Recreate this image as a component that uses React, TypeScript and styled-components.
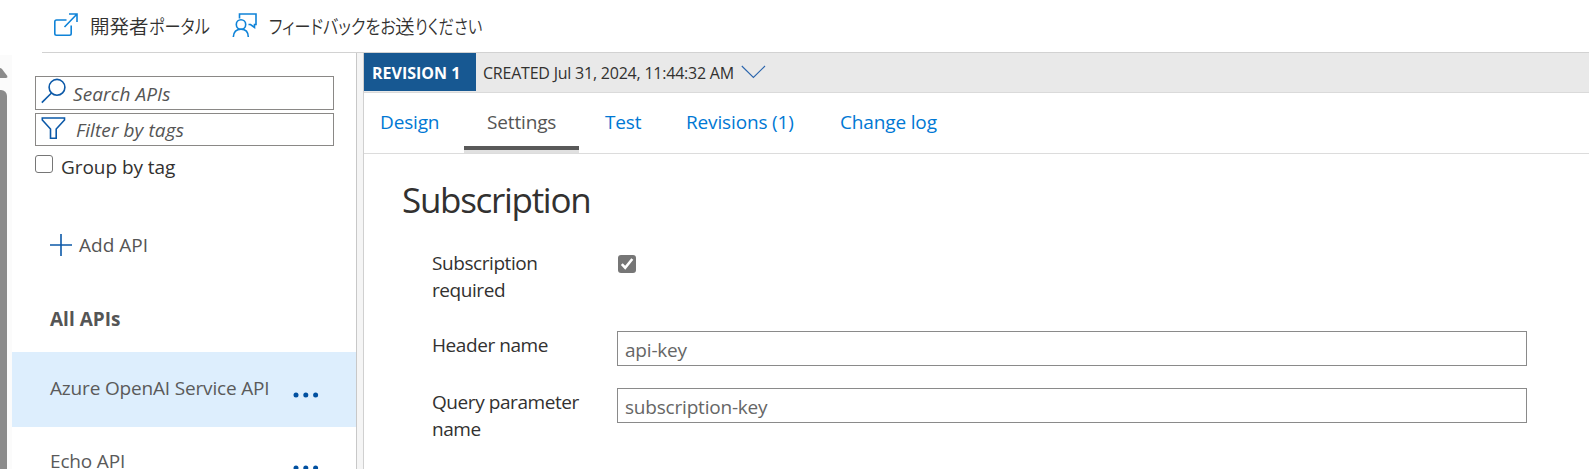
import React from "react";
import styled, { createGlobalStyle } from "styled-components";

const GlobalStyle = createGlobalStyle`
  * { box-sizing: border-box; }
  html, body { margin: 0; padding: 0; }
  body {
    height: 469px;
    overflow: hidden;
    background: #fff;
    color: #323130;
    font-family: "Open Sans", "Noto Sans CJK JP", sans-serif;
    font-size: 19px;
    line-height: 27px;
  }
`;

const Page = styled.div`
  display: flex;
  flex-direction: column;
  height: 469px;
  overflow: hidden;
`;

const Toolbar = styled.header`
  display: flex;
  flex: none;
  height: 53px;
  margin-left: 42px;
  padding-left: 12px;
  border-bottom: 1px solid #d2d2d2;
`;

const Command = styled.button<{ $width: number }>`
  display: flex;
  align-items: flex-start;
  gap: 12px;
  width: ${(p) => p.$width}px;
  padding: 13px 0 0;
  border: 0;
  background: none;
  color: #323130;
  font: inherit;
  text-align: left;

  svg { flex: none; }
`;

const CommandLabel = styled.span`
  margin-top: -1px;
  white-space: nowrap;
  font-family: "Noto Sans CJK JP", sans-serif;
  font-weight: 350;
  font-size: 19.5px;
  line-height: 28px;
  font-feature-settings: "palt";
`;

const Kana = styled.span<{ $width: number; $scale: number }>`
  display: inline-block;
  width: ${(p) => p.$width / p.$scale}px;
  margin-right: ${(p) => p.$width - p.$width / p.$scale}px;
  transform: scaleX(${(p) => p.$scale});
  transform-origin: left;
`;

const Body = styled.div`
  display: flex;
  flex: 1;
  min-height: 0;
`;

const ScrollTrack = styled.div`
  display: flex;
  flex-direction: column;
  width: 12px;
  margin-top: 2px;
  background: #fbfbfb;

  svg { display: block; margin-top: 13px; }
`;

const ScrollThumb = styled.div`
  flex: 1;
  width: 7px;
  margin-top: 12px;
  border-top-right-radius: 6px;
  background: #8b8b8b;
`;

const Sidebar = styled.aside`
  width: 345px;
  border-right: 1px solid #c8c8c8;
  overflow: hidden;
`;

const SearchBox = styled.div<{ $height: number; $gap: number; $top: number }>`
  display: flex;
  width: 299px;
  height: ${(p) => p.$height}px;
  margin-left: 23px;
  padding-left: 5px;
  gap: ${(p) => p.$gap}px;
  border: 1px solid #8a8886;
  color: #555;
  font-style: italic;
  letter-spacing: 0.1px;

  svg { flex: none; margin-top: 1px; }
  span { padding-top: ${(p) => p.$top}px; }
`;

const Filters = styled.div`
  display: flex;
  flex-direction: column;
  gap: 3px;
  padding-top: 23px;
`;

const GroupOption = styled.label`
  display: flex;
  align-items: flex-start;
  gap: 8px;
  margin: 9px 0 0 23px;
  height: 36px;
  letter-spacing: -0.05px;
`;

const EmptyBox = styled.span`
  width: 18px;
  height: 18px;
  border: 1px solid #767676;
  border-radius: 3px;
`;

const GroupText = styled.span`
  margin-top: -1px;
`;

const AddApi = styled.button`
  display: flex;
  align-items: center;
  gap: 7px;
  height: 27px;
  margin: 41px 0 0 38px;
  padding: 0;
  border: 0;
  background: none;
  color: #555;
  font: inherit;

  svg { margin-top: -1px; }
`;

const ApiHeading = styled.div`
  margin-top: 47px;
  height: 46px;
  padding-left: 38px;
  color: #555;
  font-weight: 700;
`;

const ApiRow = styled.div<{ $selected?: boolean; $pad: number }>`
  display: flex;
  justify-content: space-between;
  height: 75px;
  padding: ${(p) => p.$pad}px 37px 0 38px;
  background: ${(p) => (p.$selected ? "#ddeefd" : "transparent")};
  color: #5a5a5a;
  letter-spacing: -0.17px;

  svg { margin-top: 16.500px; }
`;

const Splitter = styled.div`
  width: 7px;
  border-right: 1px solid #d0d0d0;
  background: #f5f5f5;
`;

const Main = styled.main`
  flex: 1;
  min-width: 0;
`;

const RevisionBar = styled.div`
  display: flex;
  height: 40px;
  border-bottom: 1px solid #dadada;
  background: #e9e9e9;
  font-size: 16px;
  line-height: 40px;
`;

const RevisionBadge = styled.div`
  width: 112px;
  height: 38px;
  padding-left: 8px;
  background: #175892;
  color: #fff;
  font-weight: 700;
`;

const RevisionInfo = styled.div`
  display: flex;
  gap: 7px;
  padding-left: 7px;
  letter-spacing: -0.22px;

  svg { margin-top: 12px; }
`;

const Tabs = styled.nav`
  display: flex;
  height: 61px;
  padding-left: 16px;
  border-bottom: 1px solid #dcdcdc;
`;

const Tab = styled.a<{ $width: number; $active?: boolean }>`
  width: ${(p) => p.$width}px;
  height: 60px;
  padding-top: 16px;
  letter-spacing: -0.15px;
  color: ${(p) => (p.$active ? "#555" : "#0078d4")};
  ${(p) =>
    p.$active &&
    `
    margin-right: 26px;
    padding-left: 23px;
    border-bottom: 3px solid #e0e0e0;
    box-shadow: inset 0 -4px 0 #595959;
  `}
`;

const Title = styled.h1`
  margin: 22px 0 0 38px;
  font-size: 35px;
  font-weight: 400;
  line-height: 48px;
  letter-spacing: -1.3px;
`;

const Form = styled.div`
  display: grid;
  grid-template-columns: 185px 910px;
  grid-template-rows: 81px 57px 60px;
  margin: 26px 0 0 68px;
`;

const Label = styled.div<{ $top?: number }>`
  width: 160px;
  padding-top: ${(p) => p.$top ?? 0}px;
  letter-spacing: -0.43px;
`;

const CheckedBox = styled.span`
  display: flex;
  width: 18px;
  height: 18px;
  margin: 5px 0 0 1px;
  border-radius: 3px;
  background: #767676;
`;

const TextField = styled.div`
  height: 35px;
  padding: 5px 8px 0 7px;
  border: 1px solid #8a8a8a;
  color: #666;
  letter-spacing: -0.2px;
`;

const Dots = () => (
  <svg width="26" height="6" viewBox="0 0 26 6" fill="#0050a0">
    <circle cx="3" cy="3" r="2.500" />
    <circle cx="12.800" cy="3" r="2.500" />
    <circle cx="22.600" cy="3" r="2.500" />
  </svg>
);

export default function App() {
  return (
    <Page>
      <GlobalStyle />
      <Toolbar>
        <Command $width={178}>
          <svg width="24" height="24" viewBox="0 0 24 24" fill="none" stroke="#0f83d8" strokeWidth="1.600">
            <path d="M12.500 7H2.500Q.8 7 .8 8.700V20.500Q.8 22.200 2.500 22.200H15.500Q17.200 22.200 17.200 20.500V12.500" />
            <path d="M10.500 14L22.800 1.200M15 1H23V9" />
          </svg>
          <CommandLabel>開発者<Kana $width={61} $scale={0.83}>ポータル</Kana></CommandLabel>
        </Command>
        <Command $width={260}>
          <svg width="25" height="25" viewBox="0 0 25 25" fill="none" stroke="#0f83d8" strokeWidth="1.600">
            <path d="M7.500 5.500V1H24V11.500H22.500V14.500L18.500 11.500H16.500" />
            <circle cx="9" cy="11.500" r="4.700" />
            <path d="M1.300 24Q1.800 16.300 9 16.300T16.300 24" />
          </svg>
          <CommandLabel>
            <Kana $width={126} $scale={0.825}>フィードバックをお</Kana>送
            <Kana $width={69} $scale={0.79}>りください</Kana>
          </CommandLabel>
        </Command>
      </Toolbar>
      <Body>
        <ScrollTrack>
          <svg width="8" height="10" viewBox="0 0 8 10">
            <path d="M0 0Q1 0 2 1L7.300 8Q8 10 6 10H0Z" fill="#8b8b8b" />
          </svg>
          <ScrollThumb />
        </ScrollTrack>
        <Sidebar>
          <Filters>
            <SearchBox $height={34} $gap={7} $top={4}>
              <svg width="25" height="26" viewBox="0 0 25 26" fill="none" stroke="#0c59a8" strokeWidth="1.600">
                <circle cx="16" cy="9.300" r="7.900" />
                <path d="M10.500 15L.8 24.600" />
              </svg>
              <span>Search APIs</span>
            </SearchBox>
            <SearchBox $height={33} $gap={10} $top={3}>
              <svg width="25" height="26" viewBox="0 0 25 26" fill="none" stroke="#0c59a8" strokeWidth="1.600">
                <path d="M1.300 3H23.500V5L15.200 14V23.300H9.500V14L1.300 5Z" />
              </svg>
              <span>Filter by tags</span>
            </SearchBox>
          </Filters>
          <GroupOption>
            <EmptyBox />
            <GroupText>Group by tag</GroupText>
          </GroupOption>
          <AddApi>
            <svg width="22" height="22" viewBox="0 0 22 22" stroke="#0c59a8" strokeWidth="1.600">
              <path d="M11 0V22M0 11H22" />
            </svg>
            Add API
          </AddApi>
          <ApiHeading>All APIs</ApiHeading>
          <ApiRow $selected $pad={23}>
            Azure OpenAI Service API
            <Dots />
          </ApiRow>
          <ApiRow $pad={21}>
            Echo API
            <Dots />
          </ApiRow>
        </Sidebar>
        <Splitter />
        <Main>
          <RevisionBar>
            <RevisionBadge>REVISION 1</RevisionBadge>
            <RevisionInfo>
              CREATED Jul 31, 2024, 11:44:32 AM
              <svg width="25" height="14" viewBox="0 0 25 14" fill="none" stroke="#2b65ad" strokeWidth="1.100">
                <path d="M.8 1L12.400 12.500L24 1" />
              </svg>
            </RevisionInfo>
          </RevisionBar>
          <Tabs>
            <Tab $width={84}>Design</Tab>
            <Tab $width={115} $active>Settings</Tab>
            <Tab $width={81}>Test</Tab>
            <Tab $width={154}>Revisions (1)</Tab>
            <Tab $width={150}>Change log</Tab>
          </Tabs>
          <Title>Subscription</Title>
          <Form>
            <Label>Subscription required</Label>
            <CheckedBox>
              <svg width="18" height="18" viewBox="0 0 18 18" fill="none" stroke="#fff" strokeWidth="2.600">
                <path d="M3.800 9.200L7.200 12.700L14.300 4" />
              </svg>
            </CheckedBox>
            <Label $top={1}>Header name</Label>
            <TextField>api-key</TextField>
            <Label $top={1}>Query parameter name</Label>
            <TextField>subscription-key</TextField>
          </Form>
        </Main>
      </Body>
    </Page>
  );
}
